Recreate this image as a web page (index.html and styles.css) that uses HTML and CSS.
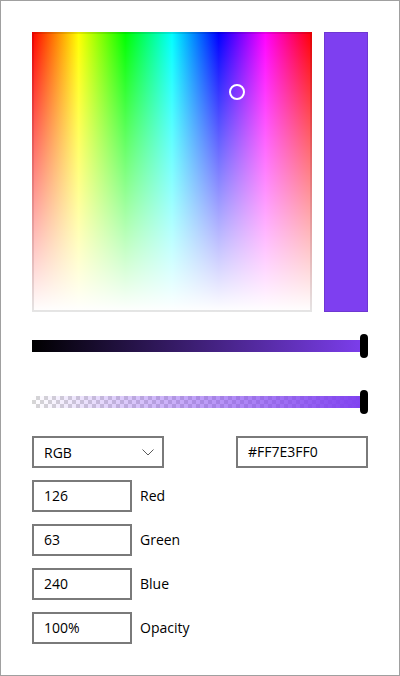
FILE: index.html
```html
<!DOCTYPE html>
<html>
<head>
<meta charset="utf-8">
<link rel="stylesheet" href="styles.css">
</head>
<body>
<div class="picker">
  <div class="top">
    <div class="spectrum">
      <div class="selector"></div>
    </div>
    <div class="preview"></div>
  </div>
  <div class="slider">
    <div class="track value-track"></div>
    <div class="thumb"></div>
  </div>
  <div class="slider">
    <div class="track alpha-track"><div class="alpha-fill"></div></div>
    <div class="thumb"></div>
  </div>
  <div class="mode-row">
    <div class="combo">
      <span>RGB</span>
      <svg class="chev" width="12" height="7" viewBox="0 0 12 7"><path d="M0.5 0.5 L6 6 L11.5 0.5" fill="none" stroke="#5a5a5a" stroke-width="1"/></svg>
    </div>
    <div class="box hex">#FF7E3FF0</div>
  </div>
  <div class="field"><div class="box num">126</div><span class="label">Red</span></div>
  <div class="field"><div class="box num">63</div><span class="label">Green</span></div>
  <div class="field"><div class="box num">240</div><span class="label">Blue</span></div>
  <div class="field"><div class="box num">100%</div><span class="label">Opacity</span></div>
</div>
</body>
</html>
```
FILE: styles.css
```css
* { box-sizing: border-box; }
html, body { margin: 0; padding: 0; background: #fff; }
body {
  font-family: "Open Sans", "Noto Sans", sans-serif;
  font-size: 14px;
  color: #000;
}
.picker {
  width: 400px;
  height: 676px;
  border: 1px solid #a0a0a0;
  padding: 31px;
  display: flex;
  flex-direction: column;
}
.top {
  display: flex;
  gap: 12px;
  height: 280px;
}
.spectrum {
  position: relative;
  width: 280px;
  height: 280px;
  border: 2px solid rgba(0,0,0,0.1);
  background-origin: border-box;
  background-clip: border-box;
  background-repeat: no-repeat;
  background-image:
    linear-gradient(to bottom, rgba(255,255,255,0), #ffffff),
    linear-gradient(to right,
    #ff0000 0%, #ffff00 16.67%, #00ff00 33.33%, #00ffff 50%,
    #0000ff 66.67%, #ff00ff 83.33%, #ff0000 100%);
}
.selector {
  position: absolute;
  left: 195px;
  top: 50px;
  width: 16px;
  height: 16px;
  border: 2px solid #fff;
  border-radius: 50%;
}
.preview {
  width: 44px;
  height: 280px;
  background: #7e3ff0;
  border: 1px solid rgba(0,0,0,0.12);
}
.slider {
  position: relative;
  height: 24px;
  display: flex;
  align-items: center;
  margin-top: 22px;
}
.slider + .slider { margin-top: 32px; }
.track {
  width: 100%;
  height: 12px;
}
.value-track {
  background: linear-gradient(to right, #000000, #7e3ff0);
}
.alpha-track {
  background-color: #fff;
  background-image:
    linear-gradient(45deg, #d6d6d6 25%, transparent 25%, transparent 75%, #d6d6d6 75%),
    linear-gradient(45deg, #d6d6d6 25%, transparent 25%, transparent 75%, #d6d6d6 75%);
  background-size: 8px 8px;
  background-position: 0 0, 4px 4px;
}
.alpha-fill {
  height: 100%;
  background: linear-gradient(to right, rgba(126,63,240,0), #7e3ff0);
}
.thumb {
  position: absolute;
  right: 0;
  top: 0;
  width: 8px;
  height: 24px;
  border-radius: 4px;
  background: #000;
}
.mode-row {
  display: flex;
  justify-content: space-between;
  margin-top: 22px;
}
.box {
  height: 32px;
  border: 2px solid #7a7a7a;
  display: flex;
  align-items: center;
  padding: 0 10px;
  line-height: 1;
}
.combo {
  width: 132px;
  height: 32px;
  border: 2px solid #7a7a7a;
  display: flex;
  align-items: center;
  justify-content: space-between;
  padding: 0 8px 0 10px;
}
.chev { display: block; }
.hex { width: 132px; }
.field {
  display: flex;
  align-items: center;
  gap: 8px;
  margin-top: 12px;
}
.num { width: 100px; }
.label { line-height: 1; }
```
